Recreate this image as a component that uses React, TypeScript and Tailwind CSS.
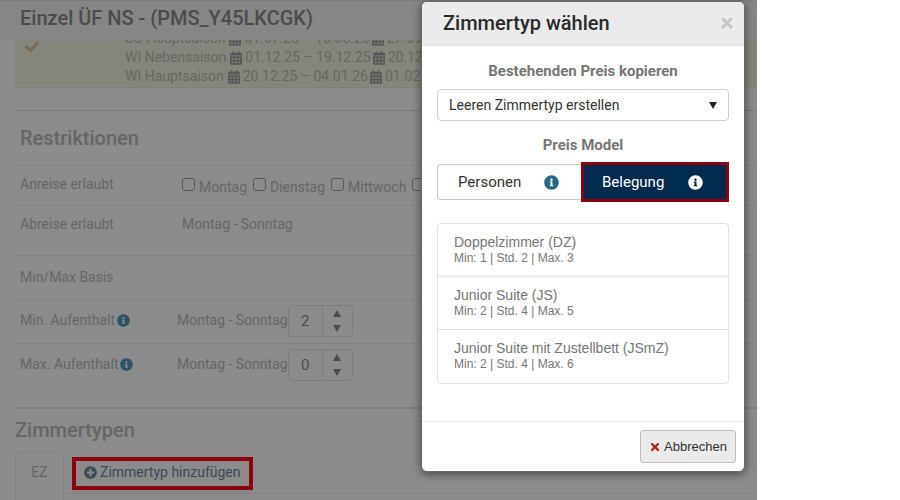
import React, { useState } from 'react';
import { FaCalendarAlt, FaCheck, FaInfoCircle, FaPlusCircle, FaTimes } from 'react-icons/fa';

interface Season {
  name: string;
  ranges: string[];
}

interface RoomType {
  name: string;
  code: string;
  min: number;
  std: number;
  max: number;
}

const SEASONS: Season[] = [
  { name: 'SO Hauptsaison', ranges: ['01.07.25 – 10.08.25', '27.09.25 – 31.10.25'] },
  { name: 'WI Nebensaison', ranges: ['01.12.25 – 19.12.25', '20.12.25 – 04.01.26'] },
  { name: 'WI Hauptsaison', ranges: ['20.12.25 – 04.01.26', '01.02.26 – 28.02.26'] },
];

const DAYS = ['Montag', 'Dienstag', 'Mittwoch', 'Donnerstag'];

const ROOM_TYPES: RoomType[] = [
  { name: 'Doppelzimmer', code: 'DZ', min: 1, std: 2, max: 3 },
  { name: 'Junior Suite', code: 'JS', min: 2, std: 4, max: 5 },
  { name: 'Junior Suite mit Zustellbett', code: 'JSmZ', min: 2, std: 4, max: 6 },
];

const SeasonList: React.FC = () => (
  <div className="ml-[15px] h-12 flex overflow-hidden bg-[#85867b] border-b border-[#818277]">
    <FaCheck className="w-[14px] h-[14px] ml-[10px] shrink-0 text-[#766a58]" />
    <div className="ml-[86px] flex flex-col justify-end pb-px whitespace-nowrap">
      {SEASONS.map((season) => (
        <div key={season.name} className="flex items-center gap-1 h-[19px] shrink-0">
          <span>{season.name}</span>
          <span className="flex items-center gap-[2px]">
            {season.ranges.map((range) => (
              <span key={range} className="flex items-center gap-[3px]">
                <FaCalendarAlt className="w-3 h-[14px] text-[#585858]" />
                {range}
              </span>
            ))}
          </span>
        </div>
      ))}
    </div>
  </div>
);

const Stepper: React.FC<{ id: string; initial: number }> = ({ id, initial }) => {
  const [value, setValue] = useState(initial);

  return (
    <div className="flex w-[65px] h-8 rounded border border-[#7c7c7c] overflow-hidden">
      <input
        id={id}
        type="text"
        inputMode="numeric"
        value={value}
        onChange={(e) => setValue(Number(e.target.value) || 0)}
        className="w-[34px] h-full text-center text-[#4c4c4c] text-[15px] border-r border-[#7c7c7c] outline-none"
      />
      <div className="flex-1 flex flex-col items-center justify-center gap-2 text-[#4c4c4c]">
        <button type="button" aria-label="Erhöhen" onClick={() => setValue(value + 1)}>
          <svg viewBox="0 0 8 7" className="w-2 h-[7px] block"><path d="M4 0 8 7H0z" fill="currentColor" /></svg>
        </button>
        <button type="button" aria-label="Verringern" onClick={() => setValue(Math.max(0, value - 1))}>
          <svg viewBox="0 0 8 7" className="w-2 h-[7px] block"><path d="M0 0H8L4 7z" fill="currentColor" /></svg>
        </button>
      </div>
    </div>
  );
};

const StayRow: React.FC<{ id: string; label: string; initial: number }> = ({ id, label, initial }) => (
  <div className="flex items-center h-11 pl-[5px] pb-[2px] border-t border-[#828282]">
    <label htmlFor={id} className="flex items-center gap-[2px] w-[157px]">
      {label}
      <FaInfoCircle className="w-[13px] h-[13px] text-[#2f5364]" />
    </label>
    <span>Montag - Sonntag</span>
    <Stepper id={id} initial={initial} />
  </div>
);

const RatePage: React.FC = () => (
  <main className="mr-[143px] h-screen overflow-hidden bg-[#8b8b8b] text-[#666666] text-sm leading-[19px] border-t border-[#7c7c7c]">
    <header className="h-[39px] pl-5 flex items-center bg-[#868686]">
      <h1 className="text-[20px] font-medium text-[#4c4c4c] pb-1">Einzel ÜF NS - (PMS_Y45LKCGK)</h1>
    </header>
    <SeasonList />

    <section className="ml-[15px] mt-[22px] border-t border-[#7a7a7a]">
      <h2 className="h-[54px] pl-[5px] flex items-center text-[20px] font-medium">Restriktionen</h2>
      <div className="flex h-10 pl-[5px] pt-[9px] border-t border-[#828282] whitespace-nowrap overflow-hidden">
        <span className="w-[162px] shrink-0">Anreise erlaubt</span>
        <div className="flex gap-[6px] pt-[3px]">
          {DAYS.map((day) => (
            <label key={day} className="flex items-start gap-1">
              <input type="checkbox" className="appearance-none w-[13px] h-[13px] rounded-[3px] border border-[#585858]" />
              {day}
            </label>
          ))}
        </div>
      </div>
      <div className="flex h-[50px] pl-[5px] pt-[9px] border-t border-[#828282]">
        <span className="w-[162px]">Abreise erlaubt</span>
        <span>Montag - Sonntag</span>
      </div>
      <div className="flex items-center h-11 pl-[5px] border-t border-[#828282]">Min/Max Basis</div>
      <StayRow id="min-stay" label="Min. Aufenthalt" initial={2} />
      <StayRow id="max-stay" label="Max. Aufenthalt" initial={0} />
    </section>

    <section className="ml-[15px] mt-5 border-t-2 border-[#7e7e7e]">
      <h2 className="h-[43px] flex items-center text-[20px] font-medium">Zimmertypen</h2>
      <div className="flex items-start">
        <button type="button" className="w-[49px] h-[60px] pb-[19px] border border-[#828282] rounded-t">EZ</button>
        <div className="flex-1 h-[42px] pl-2 pt-[5px] border-b border-[#828282]">
          <button type="button" className="flex items-center gap-[3px] h-[33px] pl-2 pr-2 pb-[2px] border-4 border-[#8c0010] text-[#3c4a56]">
            <FaPlusCircle className="w-[13px] h-[13px]" />
            Zimmertyp hinzufügen
          </button>
        </div>
      </div>
    </section>
  </main>
);

const RoomTypeDialog: React.FC = () => {
  const [model, setModel] = useState('Belegung');

  return (
    <div
      role="dialog"
      aria-labelledby="dialog-title"
      className="absolute top-px right-[155px] w-[324px] rounded-md border border-[#6a6a6a] bg-white shadow-[0_2px_8px_rgba(0,0,0,0.5)] overflow-hidden text-[#757575]"
    >
      <div className="flex items-center justify-between h-11 pl-[21px] pr-[11px] pb-[2px] bg-[#ebebeb] border-b border-[#e4e4e4]">
        <h2 id="dialog-title" className="text-[20px] leading-6 font-medium text-[#2a2a2a]">Zimmertyp wählen</h2>
        <button type="button" aria-label="Schließen" className="text-[#c4c4c4]">
          <svg viewBox="0 0 12 12" className="w-3 h-3 block">
            <path d="M2 2 10 10M10 2 2 10" stroke="currentColor" strokeWidth="3" strokeLinecap="round" />
          </svg>
        </button>
      </div>

      <div className="px-[15px] pt-4 pb-[37px]">
        <label htmlFor="copy-price" className="block text-center text-[15px] leading-[18px] font-bold">
          Bestehenden Preis kopieren
        </label>
        <div className="relative mt-[9px]">
          <select
            id="copy-price"
            className="appearance-none block w-full h-8 pl-[11px] rounded border border-[#cfcfcf] bg-white text-sm text-[#333333]"
          >
            <option>Leeren Zimmertyp erstellen</option>
          </select>
          <svg viewBox="0 0 8 7" className="absolute right-3 top-[13px] w-2 h-[7px] pointer-events-none">
            <path d="M0 0H8L4 7z" fill="#222222" />
          </svg>
        </div>

        <h3 className="mt-[15px] text-center text-[15px] leading-[18px] font-bold">Preis Model</h3>
        <div className="flex items-center mt-2 h-10">
          <button
            type="button"
            onClick={() => setModel('Personen')}
            aria-pressed={model === 'Personen'}
            className="flex items-center justify-between flex-1 h-9 pl-5 pr-[22px] rounded-l border border-r-0 border-[#c8c8c8] text-[15px] text-[#333333]"
          >
            Personen
            <FaInfoCircle className="w-[15px] h-[15px] text-[#24698c]" />
          </button>
          <button
            type="button"
            onClick={() => setModel('Belegung')}
            aria-pressed={model === 'Belegung'}
            className="flex items-center justify-between w-[148px] h-10 pl-[18px] pr-[23px] border-[3px] border-[#8c0010] bg-[#002b4f] text-[15px] text-white"
          >
            Belegung
            <FaInfoCircle className="w-[15px] h-[15px]" />
          </button>
        </div>

        <ul className="mt-[21px] rounded border border-[#e0e0e0] divide-y divide-[#e0e0e0] font-['Liberation_Sans',sans-serif]">
          {ROOM_TYPES.map((room) => (
            <li key={room.code} className="h-[53px] pl-4 pt-[10px]">
              <div className="text-sm leading-[17px]">{room.name} ({room.code})</div>
              <div className="text-xs leading-[15px]">
                Min: {room.min} | Std. {room.std} | Max. {room.max}
              </div>
            </li>
          ))}
        </ul>
      </div>

      <div className="flex justify-end p-2 border-t border-[#e5e5e5]">
        <button
          type="button"
          className="flex items-center gap-[3px] h-[33px] px-2 rounded-[3px] border border-[#bdbdbd] bg-[#ebebeb] text-[13px] text-[#333333] font-['Liberation_Sans',sans-serif]"
        >
          <FaTimes className="w-3 h-3 text-[#b02020]" />
          Abbrechen
        </button>
      </div>
    </div>
  );
};

const App: React.FC = () => (
  <div className="relative min-h-screen bg-white font-[Roboto,sans-serif] overflow-hidden">
    <RatePage />
    <RoomTypeDialog />
  </div>
);

export default App;
